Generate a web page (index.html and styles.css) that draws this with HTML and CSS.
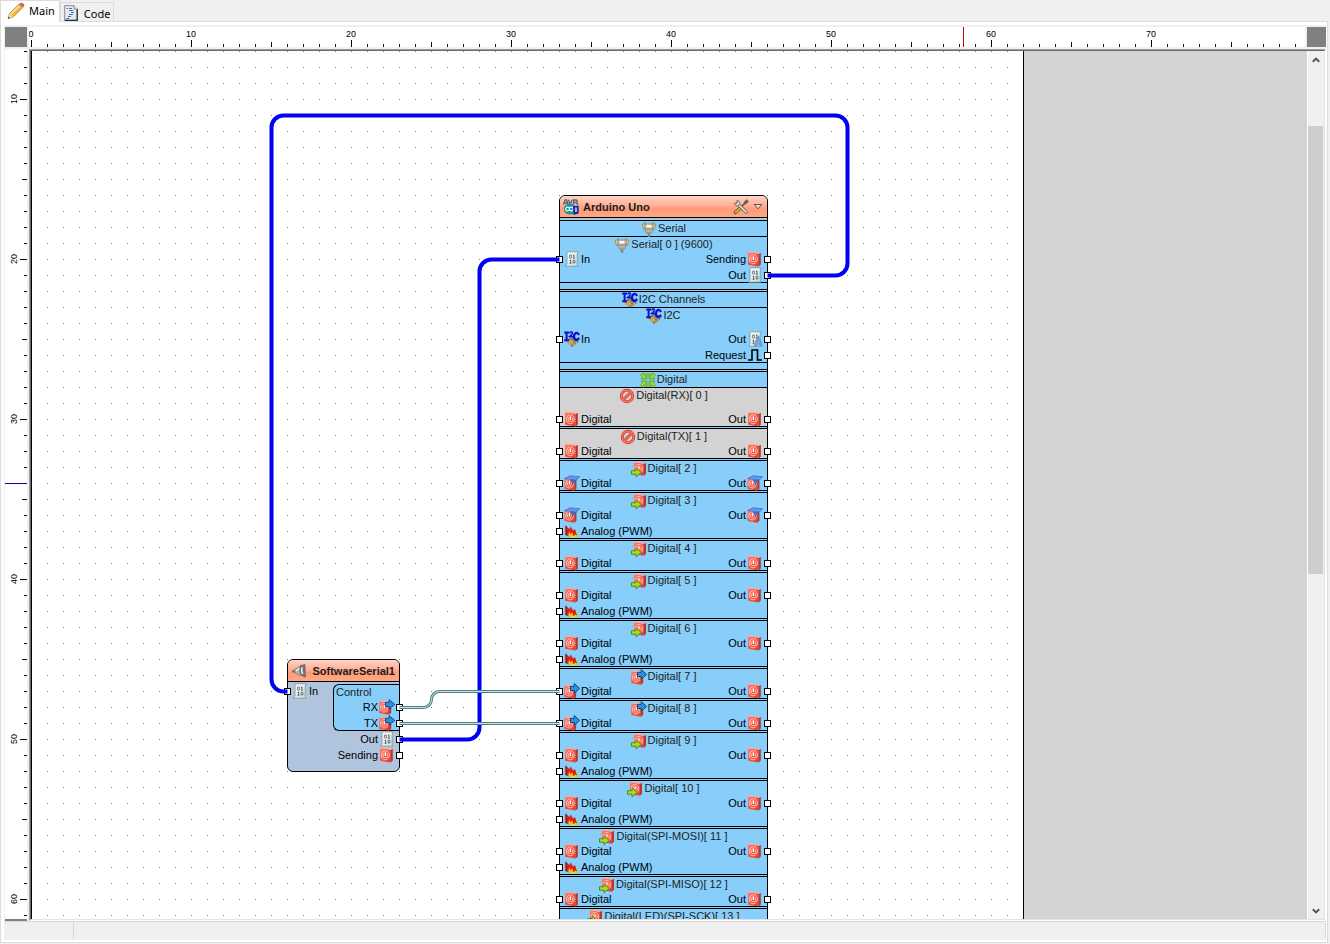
FILE: index.html
```html
<!DOCTYPE html>
<html lang="en">
<head>
    <meta charset="UTF-8">
    <meta name="viewport" content="width=device-width, initial-scale=1.0">
    <title>Arduino Uno</title>
    <link rel="stylesheet" href="styles.css">
</head>
<body>
    <svg class="defs" width="0" height="0" aria-hidden="true">
        <defs>
            <linearGradient id="red" x1="0" y1="0" x2="1" y2="1">
                <stop offset="0" stop-color="#ff8a78"/>
                <stop offset=".5" stop-color="#f4503c"/>
                <stop offset="1" stop-color="#e83a26"/>
            </linearGradient>
            <linearGradient id="paper" x1="0" y1="0" x2="1" y2="1">
                <stop offset="0" stop-color="#fff"/>
                <stop offset="1" stop-color="#c4dcdc"/>
            </linearGradient>
        </defs>
        <symbol id="i-power" viewBox="0 0 16 16">
            <path d="M1 1.2 11.6 2.8V15.6L1 13.8Z" fill="url(#red)"/>
            <path d="M11.6 2.8 13.8 1.8V13.6L11.6 15.6Z" fill="#b83428"/>
            <path d="M1 1.2 3.4.4 13.8 1.8 11.6 2.8Z" fill="#ffb0a0"/>
            <ellipse cx="6.4" cy="8.3" rx="3.9" ry="4.5" fill="none" stroke="#ffc4ba" stroke-width="1"/>
            <path d="M5 6.2Q3.9 7.2 4.2 8.9 4.8 10.8 6.4 10.9 8.3 10.8 8.7 9 8.8 7.2 7.9 6.4" fill="none" stroke="#fff" stroke-width=".7"/>
            <path d="M6.4 5.2V9" stroke="#fff" stroke-width="1.3"/>
        </symbol>
        <symbol id="i-power-in" viewBox="0 0 16 16">
            <use href="#i-power" x="2" y="0" width="15" height="15"/>
            <path d="M.5 9.7H5V7L10.2 11.4 5 15.8V13.2H.5Z" fill="#a4dc28" stroke="#4d7f10" stroke-width=".9"/>
        </symbol>
        <symbol id="i-power-out" viewBox="0 0 16 16">
            <use href="#i-power" x="-1" y="1" width="15.5" height="15"/>
            <path d="M6.5 3.3H10.2V.6L15.7 5.4 10.2 10.2V7.5H6.5Z" fill="#2f8fe0" stroke="#0c3c78" stroke-width=".9"/>
        </symbol>
        <symbol id="i-filter" viewBox="0 0 16 16">
            <use href="#i-power" x="-1" y="1" width="16" height="15"/>
            <path d="M.8 3.6 6 .8 15.8 1.8 12 5.2Z" fill="#5b9af0" stroke="#2d5db8" stroke-width=".6"/>
            <path d="M6 4.4 12 5.2 9.5 8 8.4 11 7.6 7.6Z" fill="#3a6cd0"/>
        </symbol>
        <symbol id="i-binary" viewBox="0 0 16 16">
            <path d="M3 .8H14.4L13.2 3V13L14 15.2H1.2L3 13Z" fill="url(#paper)" stroke="#7d9494" stroke-width=".8"/>
            <g fill="none" stroke="#444" stroke-width=".8">
                <ellipse cx="6.5" cy="5.5" rx="1.1" ry="1.6"/>
                <path d="M9 4.4 10 3.9V7M8.9 7.2H11"/>
                <ellipse cx="10" cy="10.6" rx="1.1" ry="1.6"/>
                <path d="M5.6 9.5 6.6 9V12M5.5 12.3H7.6"/>
            </g>
        </symbol>
        <symbol id="i-data" viewBox="0 0 16 16">
            <use href="#i-binary"/>
            <path d="M7 15 11.6 5 15.5 15H12.8L12 12.4 9.6 15Z" fill="#7aa8dc" stroke="#4a78b4" stroke-width=".5"/>
        </symbol>
        <symbol id="i-serial" viewBox="0 0 16 16">
            <path d="M1.2 3H14.8L13.6 8H2.4Z" fill="#d9d5c8" stroke="#85806e" stroke-width=".8"/>
            <path d="M3.6 8H12.4L10.6 12H5.4Z" fill="#b4b4ac" stroke="#77776e" stroke-width=".6"/>
            <path d="M8 12V15.8" stroke="#8a8a80" stroke-width="2.6"/>
            <path d="M4 .8V9M12 .8V9" stroke="#a89458" stroke-width="1.4"/>
            <path d="M6 5H10" stroke="#fff" stroke-width="2"/>
        </symbol>
        <symbol id="i-i2c" viewBox="0 0 16 16">
            <path d="M2.6 10 8 6 14.5 10.5 8 15.6Z" fill="#85858c" stroke="#44464e" stroke-width=".6"/>
            <path d="M2.8 10.5 7.5 8.5 9.4 12 6.5 15Z" fill="#d9a53c"/>
            <path d="M10 12.5V15M12.4 11V13.6" stroke="#e9b53c" stroke-width="1.1"/>
            <path d="M.2 1.6H5M2.6 1.6V9M.2 9.2H5" stroke="#1010c4" stroke-width="2" fill="none"/>
            <path d="M5.4 2.2Q7.8-.4 8.4 2 8.4 3.4 5.6 5.6H9.2" stroke="#1010c4" stroke-width="1.5" fill="none"/>
            <path d="M15 4Q14 1.4 11.8 2 9.8 3.2 10 5.8 10.4 9 12.8 8.8L15.3 7.2" stroke="#1010c4" stroke-width="2.3" fill="none"/>
        </symbol>
        <symbol id="i-pulse" viewBox="0 0 16 16">
            <path d="M1 13H5V3H10.5V13H15" fill="none" stroke="#000" stroke-width="1.6"/>
        </symbol>
        <symbol id="i-digital" viewBox="0 0 16 16">
            <g fill="#84cc1c" stroke="#5c9c18" stroke-width=".6">
                <path d="M.5 3.2 3.2.5 5 2.6 7 1V7H1L2.6 5Z"/>
                <path d="M15.5 3.2 12.8.5 11 2.6 9 1V7H15L13.4 5Z"/>
                <path d="M.5 12.8 3.2 15.5 5 13.4 7 15V9H1L2.6 11Z"/>
                <path d="M15.5 12.8 12.8 15.5 11 13.4 9 15V9H15L13.4 11Z"/>
            </g>
            <path d="M2 3 5 6M14 3 11 6M2 13 5 10M14 13 11 10" stroke="#d4f08c" stroke-width=".8"/>
        </symbol>
        <symbol id="i-locked" viewBox="0 0 16 16">
            <circle cx="8" cy="8" r="5.8" fill="none" stroke="#c83020" stroke-width="2.8"/>
            <path d="M4.2 11.8 11.8 4.2" stroke="#c83020" stroke-width="2.8"/>
            <circle cx="8" cy="8" r="5.8" fill="none" stroke="#f8735e" stroke-width="1.6"/>
            <path d="M4.2 11.8 11.8 4.2" stroke="#f8735e" stroke-width="1.6"/>
        </symbol>
        <symbol id="i-pwm" viewBox="0 0 16 16">
            <path d="M3 12.5 12.5 8 13.5 15 6 14Z" fill="#f0d428"/>
            <path d="M1.5 12V2.5L5.5 6 6.6 3.6 9.2 7.4 11 6 13.2 12.8 11 11.4 9.5 13.2 7.5 11 5 13.4Z" fill="#d42418"/>
            <path d="M4.2 12.5 5 8.5 6.8 11 8 9.3 9.6 12.4 7.5 11.6 5.5 14Z" fill="#f6b428"/>
            <path d="M1.5 12V2.5L2.6 3.4V12.6Z" fill="#8c1410"/>
        </symbol>
        <symbol id="i-avr" viewBox="0 0 16 16">
            <path d="M.5 5.5 2.2.8H3.6L5 5.5M1.6 4H4.2M5.4.8 7.2 5.2 9.2.8M10.6 5.5V1H13.4Q15.4 2.2 13.2 3.4H11M13 3.4 15 5.5" fill="none" stroke="#50646c" stroke-width="1.3"/>
            <ellipse cx="7" cy="10" rx="6.2" ry="5.6" fill="#1a97a4"/>
            <path d="M2.6 10A1.9 1.9 0 1 1 6.4 10 1.9 1.9 0 1 0 10.2 10 1.9 1.9 0 1 0 6.4 10 1.9 1.9 0 1 1 2.6 10" fill="none" stroke="#fff" stroke-width="1.1"/>
            <path d="M10 7.2 15.6 6.4V14.6L10.5 16Z" fill="#1028b0"/>
            <path d="M13 8.6V13" stroke="#fff" stroke-width="1.3"/>
        </symbol>
        <symbol id="i-tools" viewBox="0 0 16 16">
            <path d="M2.4 13.6 7.4 9" stroke="#6b5a28" stroke-width="3.4" stroke-linecap="round"/>
            <path d="M2.6 13.4 7 9.4" stroke="#f0b428" stroke-width="1.8" stroke-linecap="round"/>
            <path d="M7 9.2 12.4 3.6" stroke="#5f5f58" stroke-width="1.8"/>
            <path d="M11.6 4.4 14.8 1.4" stroke="#5f5f58" stroke-width="3"/>
            <path d="M4 4.3 13.2 13.2" stroke="#5f5f58" stroke-width="3.2" stroke-linecap="round"/>
            <path d="M4 4.3 13.2 13.2" stroke="#dcdcd2" stroke-width="1.7" stroke-linecap="round"/>
            <path d="M4 1.3A2.8 2.8 0 1 1 1.2 4.2L3.4 4.6 4.4 3.4Z" fill="#dcdcd2" stroke="#66665e" stroke-width=".8"/>
        </symbol>
        <symbol id="i-expand" viewBox="0 0 10 8">
            <path d="M1.2 1.5H8.8L5 5.8Z" fill="#ffd8ca" stroke="#555" stroke-width="1"/>
        </symbol>
        <symbol id="i-plug" viewBox="0 0 16 16">
            <path d="M1 8.4H5" stroke="#77706c" stroke-width="2.2"/>
            <path d="M3 6.5 9.5 3V12.5L5 11Z" fill="#b4aca8" stroke="#77706c" stroke-width=".6"/>
            <path d="M5 8 9 5.4" stroke="#eee" stroke-width="1.4"/>
            <path d="M9.5 2.5 14 1.6 14.4 14 10.5 12.5Q7.6 8 9.5 2.5Z" fill="#77777a" stroke="#555" stroke-width=".6"/>
            <path d="M11 4.5Q10 8 11.6 11" stroke="#eee" stroke-width="1.6" fill="none"/>
        </symbol>
        <symbol id="i-pencil" viewBox="0 0 18 18">
            <path d="M1 16.5 2.5 11.6 12.5 1.8 16 5.3 6 15Z" fill="#f5b73a" stroke="#a8702a" stroke-width=".8"/>
            <path d="M3.8 12.3 12.6 3.6" stroke="#ffe49a" stroke-width="1.5"/>
            <path d="M12 2.4 14 .8Q17.4 1 17.2 4L15.6 5.8Z" fill="#e06038"/>
            <path d="M11.2 3.1 12.2 2.1 15.8 5.7 14.8 6.7Z" fill="#a8b4c0"/>
            <path d="M1 16.5 2.5 11.6 6 15Z" fill="#f6dcb0"/>
            <path d="M1 16.7 1.7 14.6 3.1 16Z" fill="#333"/>
        </symbol>
        <symbol id="i-code" viewBox="0 0 14 16">
            <path d="M.7.7H10L13.3 4V15.3H.7Z" fill="#e8eaec" stroke="#888" stroke-width="1"/>
            <path d="M13.2 4V15.3H.7" fill="none" stroke="#333" stroke-width="1.3"/>
            <path d="M10 .7V4H13.3" fill="#fff" stroke="#777" stroke-width=".9"/>
            <path d="M2.5 3.5H4M5 3.5H8M5 5.5H9M7 7.5H10M5 9.5H9M4 11.5H7M2.5 13.5H5" stroke="#2b78d4" stroke-width="1.1"/>
        </symbol>
    </svg>

    <div class="tabs" role="tablist">
        <button class="tab active" role="tab"><svg class="tab-icon"><use href="#i-pencil"/></svg>Main</button>
        <button class="tab" role="tab"><svg class="tab-icon small"><use href="#i-code"/></svg>Code</button>
    </div>

    <main class="panel">
        <div class="workspace">
            <div class="corner"></div>
            <div class="ruler ruler-x">
                <span>0</span><span>10</span><span>20</span><span>30</span><span>40</span><span>50</span><span>60</span><span>70</span>
                <i class="cursor-x"></i>
            </div>
            <div class="corner"></div>
            <div class="ruler ruler-y">
                <span>10</span><span>20</span><span>30</span><span>40</span><span>50</span><span>60</span>
                <i class="cursor-y"></i>
            </div>

            <div class="frame">
                <div class="frame-inner">
                    <div class="viewport">
                        <div class="sheet"></div>

                        <section class="node arduino">
                            <header class="node-head">
                                <svg class="icon"><use href="#i-avr"/></svg>
                                <h2>Arduino Uno</h2>
                                <button class="tool" aria-label="Settings"><svg class="icon"><use href="#i-tools"/></svg></button>
                                <button class="tool" aria-label="Expand"><svg class="icon-small"><use href="#i-expand"/></svg></button>
                            </header>

                            <div class="group">
                                <h3 class="title"><svg class="icon"><use href="#i-serial"/></svg>Serial</h3>
                                <div class="channel">
                                    <h4 class="title"><svg class="icon"><use href="#i-serial"/></svg>Serial[ 0 ] (9600)</h4>
                                    <div class="pins">
                                        <div class="pin in"><i class="port"></i><svg class="icon"><use href="#i-binary"/></svg>In</div>
                                        <div class="pin out">Sending<svg class="icon"><use href="#i-power"/></svg><i class="port"></i></div>
                                    </div>
                                    <div class="pins">
                                        <div class="pin out">Out<svg class="icon"><use href="#i-binary"/></svg><i class="port"></i></div>
                                    </div>
                                </div>
                            </div>

                            <div class="group">
                                <h3 class="title"><svg class="icon"><use href="#i-i2c"/></svg>I2C Channels</h3>
                                <div class="channel tall">
                                    <h4 class="title"><svg class="icon"><use href="#i-i2c"/></svg>I2C</h4>
                                    <div class="pins">
                                        <div class="pin in"><i class="port"></i><svg class="icon"><use href="#i-i2c"/></svg>In</div>
                                        <div class="pin out">Out<svg class="icon"><use href="#i-data"/></svg><i class="port"></i></div>
                                    </div>
                                    <div class="pins">
                                        <div class="pin out">Request<svg class="icon"><use href="#i-pulse"/></svg><i class="port"></i></div>
                                    </div>
                                </div>
                            </div>

                            <div class="group">
                                <h3 class="title"><svg class="icon"><use href="#i-digital"/></svg>Digital</h3>
                                <div class="channel tall disabled">
                                    <h4 class="title"><svg class="icon"><use href="#i-locked"/></svg>Digital(RX)[ 0 ]</h4>
                                    <div class="pins">
                                        <div class="pin in"><i class="port"></i><svg class="icon"><use href="#i-power"/></svg>Digital</div>
                                        <div class="pin out">Out<svg class="icon"><use href="#i-power"/></svg><i class="port"></i></div>
                                    </div>
                                </div>
                                <div class="channel disabled">
                                    <h4 class="title"><svg class="icon"><use href="#i-locked"/></svg>Digital(TX)[ 1 ]</h4>
                                    <div class="pins">
                                        <div class="pin in"><i class="port"></i><svg class="icon"><use href="#i-power"/></svg>Digital</div>
                                        <div class="pin out">Out<svg class="icon"><use href="#i-power"/></svg><i class="port"></i></div>
                                    </div>
                                </div>
                                <div class="channel">
                                    <h4 class="title"><svg class="icon"><use href="#i-power-in"/></svg>Digital[ 2 ]</h4>
                                    <div class="pins">
                                        <div class="pin in"><i class="port"></i><svg class="icon"><use href="#i-filter"/></svg>Digital</div>
                                        <div class="pin out">Out<svg class="icon"><use href="#i-filter"/></svg><i class="port"></i></div>
                                    </div>
                                </div>
                                <div class="channel">
                                    <h4 class="title"><svg class="icon"><use href="#i-power-in"/></svg>Digital[ 3 ]</h4>
                                    <div class="pins">
                                        <div class="pin in"><i class="port"></i><svg class="icon"><use href="#i-filter"/></svg>Digital</div>
                                        <div class="pin out">Out<svg class="icon"><use href="#i-filter"/></svg><i class="port"></i></div>
                                    </div>
                                    <div class="pins">
                                        <div class="pin in"><i class="port"></i><svg class="icon"><use href="#i-pwm"/></svg>Analog (PWM)</div>
                                    </div>
                                </div>
                                <div class="channel">
                                    <h4 class="title"><svg class="icon"><use href="#i-power-in"/></svg>Digital[ 4 ]</h4>
                                    <div class="pins">
                                        <div class="pin in"><i class="port"></i><svg class="icon"><use href="#i-power"/></svg>Digital</div>
                                        <div class="pin out">Out<svg class="icon"><use href="#i-power"/></svg><i class="port"></i></div>
                                    </div>
                                </div>
                                <div class="channel">
                                    <h4 class="title"><svg class="icon"><use href="#i-power-in"/></svg>Digital[ 5 ]</h4>
                                    <div class="pins">
                                        <div class="pin in"><i class="port"></i><svg class="icon"><use href="#i-power"/></svg>Digital</div>
                                        <div class="pin out">Out<svg class="icon"><use href="#i-power"/></svg><i class="port"></i></div>
                                    </div>
                                    <div class="pins">
                                        <div class="pin in"><i class="port"></i><svg class="icon"><use href="#i-pwm"/></svg>Analog (PWM)</div>
                                    </div>
                                </div>
                                <div class="channel">
                                    <h4 class="title"><svg class="icon"><use href="#i-power-in"/></svg>Digital[ 6 ]</h4>
                                    <div class="pins">
                                        <div class="pin in"><i class="port"></i><svg class="icon"><use href="#i-power"/></svg>Digital</div>
                                        <div class="pin out">Out<svg class="icon"><use href="#i-power"/></svg><i class="port"></i></div>
                                    </div>
                                    <div class="pins">
                                        <div class="pin in"><i class="port"></i><svg class="icon"><use href="#i-pwm"/></svg>Analog (PWM)</div>
                                    </div>
                                </div>
                                <div class="channel">
                                    <h4 class="title"><svg class="icon"><use href="#i-power-out"/></svg>Digital[ 7 ]</h4>
                                    <div class="pins">
                                        <div class="pin in"><i class="port"></i><svg class="icon"><use href="#i-power-out"/></svg>Digital</div>
                                        <div class="pin out">Out<svg class="icon"><use href="#i-power"/></svg><i class="port"></i></div>
                                    </div>
                                </div>
                                <div class="channel">
                                    <h4 class="title"><svg class="icon"><use href="#i-power-out"/></svg>Digital[ 8 ]</h4>
                                    <div class="pins">
                                        <div class="pin in"><i class="port"></i><svg class="icon"><use href="#i-power-out"/></svg>Digital</div>
                                        <div class="pin out">Out<svg class="icon"><use href="#i-power"/></svg><i class="port"></i></div>
                                    </div>
                                </div>
                                <div class="channel">
                                    <h4 class="title"><svg class="icon"><use href="#i-power-in"/></svg>Digital[ 9 ]</h4>
                                    <div class="pins">
                                        <div class="pin in"><i class="port"></i><svg class="icon"><use href="#i-power"/></svg>Digital</div>
                                        <div class="pin out">Out<svg class="icon"><use href="#i-power"/></svg><i class="port"></i></div>
                                    </div>
                                    <div class="pins">
                                        <div class="pin in"><i class="port"></i><svg class="icon"><use href="#i-pwm"/></svg>Analog (PWM)</div>
                                    </div>
                                </div>
                                <div class="channel">
                                    <h4 class="title"><svg class="icon"><use href="#i-power-in"/></svg>Digital[ 10 ]</h4>
                                    <div class="pins">
                                        <div class="pin in"><i class="port"></i><svg class="icon"><use href="#i-power"/></svg>Digital</div>
                                        <div class="pin out">Out<svg class="icon"><use href="#i-power"/></svg><i class="port"></i></div>
                                    </div>
                                    <div class="pins">
                                        <div class="pin in"><i class="port"></i><svg class="icon"><use href="#i-pwm"/></svg>Analog (PWM)</div>
                                    </div>
                                </div>
                                <div class="channel">
                                    <h4 class="title"><svg class="icon"><use href="#i-power-in"/></svg>Digital(SPI-MOSI)[ 11 ]</h4>
                                    <div class="pins">
                                        <div class="pin in"><i class="port"></i><svg class="icon"><use href="#i-power"/></svg>Digital</div>
                                        <div class="pin out">Out<svg class="icon"><use href="#i-power"/></svg><i class="port"></i></div>
                                    </div>
                                    <div class="pins">
                                        <div class="pin in"><i class="port"></i><svg class="icon"><use href="#i-pwm"/></svg>Analog (PWM)</div>
                                    </div>
                                </div>
                                <div class="channel">
                                    <h4 class="title"><svg class="icon"><use href="#i-power-in"/></svg>Digital(SPI-MISO)[ 12 ]</h4>
                                    <div class="pins">
                                        <div class="pin in"><i class="port"></i><svg class="icon"><use href="#i-power"/></svg>Digital</div>
                                        <div class="pin out">Out<svg class="icon"><use href="#i-power"/></svg><i class="port"></i></div>
                                    </div>
                                </div>
                                <div class="channel">
                                    <h4 class="title"><svg class="icon"><use href="#i-power-in"/></svg>Digital(LED)(SPI-SCK)[ 13 ]</h4>
                                </div>
                            </div>
                        </section>

                        <section class="node software-serial">
                            <header class="node-head">
                                <svg class="icon"><use href="#i-plug"/></svg>
                                <h2>SoftwareSerial1</h2>
                            </header>
                            <div class="node-body">
                                <div class="inputs">
                                    <div class="pin in"><i class="port"></i><svg class="icon"><use href="#i-binary"/></svg>In</div>
                                </div>
                                <div class="outputs">
                                    <div class="control">
                                        <h4 class="title">Control</h4>
                                        <div class="pins">
                                            <div class="pin out">RX<svg class="icon"><use href="#i-power-out"/></svg><i class="port"></i></div>
                                        </div>
                                        <div class="pins">
                                            <div class="pin out">TX<svg class="icon"><use href="#i-power-out"/></svg><i class="port"></i></div>
                                        </div>
                                    </div>
                                    <div class="pin out">Out<svg class="icon"><use href="#i-binary"/></svg><i class="port"></i></div>
                                    <div class="pin out">Sending<svg class="icon"><use href="#i-power"/></svg><i class="port"></i></div>
                                </div>
                            </div>
                        </section>

                        <svg class="wires" aria-hidden="true">
                            <g class="wire-data">
                                <path d="M256.5 640.5H252.5A12 12 0 0 1 240.5 628.5V76.5A12 12 0 0 1 252.5 64.5H804.5A12 12 0 0 1 816.5 76.5V212.5A12 12 0 0 1 804.5 224.5H736.5"/>
                                <path d="M368.5 688.5H436.5A12 12 0 0 0 448.5 676.5V220.5A12 12 0 0 1 460.5 208.5H528.5"/>
                            </g>
                            <g class="wire-digital">
                                <path d="M368.5 656.5H392.5A8 8 0 0 0 400.5 648.5A8 8 0 0 1 408.5 640.5H528.5M368.5 672.5H528.5"/>
                            </g>
                            <g class="wire-digital core">
                                <path d="M368.5 656.5H392.5A8 8 0 0 0 400.5 648.5A8 8 0 0 1 408.5 640.5H528.5M368.5 672.5H528.5"/>
                            </g>
                        </svg>
                    </div>

                    <div class="scrollbar">
                        <button class="scroll-button" aria-label="Scroll up"><svg width="8" height="6"><path d="M.8 4.8 4 1.6 7.2 4.8"/></svg></button>
                        <div class="track"><div class="thumb"></div></div>
                        <button class="scroll-button" aria-label="Scroll down"><svg width="8" height="6"><path d="M.8 1.2 4 4.4 7.2 1.2"/></svg></button>
                    </div>
                </div>
            </div>
        </div>

        <footer class="status">
            <div class="status-cell"></div>
            <div class="status-cell wide"></div>
        </footer>
    </main>
</body>
</html>
```

FILE: styles.css
```css
* {
    box-sizing: border-box;
}
body {
    display: flex;
    flex-direction: column;
    height: 100vh;
    margin: 0;
    padding: 0 2px 1px 0;
    overflow: hidden;
    background-color: #f0f0f0;
    color: #000;
    font-family: "Liberation Sans", Arial, sans-serif;
    font-size: 11px;
}
h2, h3, h4 {
    margin: 0;
    font-size: 11px;
    font-weight: normal;
}
button {
    padding: 0;
    border: none;
    background: none;
    font: inherit;
    color: inherit;
}
.defs {
    position: absolute;
}

/* tabs */
.tabs {
    display: flex;
    align-items: flex-end;
    height: 21px;
    border-left: 1px solid #dcdcdc;
}
.tab {
    display: flex;
    align-items: center;
    gap: 6px;
    height: 19px;
    padding: 2px 3px 0;
    border: 1px solid #dcdcdc;
    border-bottom: none;
    font-family: "Noto Sans", Tahoma, sans-serif;
}
.tab.active {
    z-index: 1;
    gap: 4px;
    height: 22px;
    margin-bottom: -1px;
    padding: 0 4px 2px 6px;
    border-left: none;
    background-color: #fff;
}
.tab-icon {
    width: 18px;
    height: 18px;
}
.tab-icon.small {
    width: 14px;
    height: 16px;
}

/* panel and rulers */
.panel {
    display: flex;
    flex: 1;
    flex-direction: column;
    min-height: 0;
    padding: 3px 1px 2px 3px;
    border: 1px solid #dcdcdc;
    background-color: #fff;
}
.workspace {
    display: grid;
    flex: 1;
    grid-template-columns: 22px 1fr 19px;
    grid-template-rows: 20px 1fr;
    gap: 2px;
    min-height: 0;
    padding: 2px 0 0 1px;
    background-color: #f0f0f0;
}
.corner {
    background-color: #808080;
}
.ruler {
    position: relative;
    display: flex;
    min-width: 0;
    min-height: 0;
    overflow: hidden;
    background-color: #fff;
    font-size: 9px;
    line-height: 12px;
}
.ruler span {
    flex: 0 0 160px;
    text-align: center;
}
.ruler-x {
    padding-top: 1px;
    background-image:
        linear-gradient(90deg, #000 1px, transparent 1px),
        linear-gradient(90deg, #000 1px, transparent 1px),
        linear-gradient(90deg, #000 1px, transparent 1px);
    background-size: 16px 3px, 80px 5px, 160px 7px;
    background-position: 2px 100%;
    background-repeat: repeat-x;
}
.ruler-x span:first-child {
    margin-left: -78px;
}
.ruler-y {
    flex-direction: column;
    border-bottom: 2px solid #808080;
    background-image:
        linear-gradient(#000 1px, transparent 1px),
        linear-gradient(#000 1px, transparent 1px),
        linear-gradient(#000 1px, transparent 1px);
    background-size: 3px 16px, 5px 80px, 7px 160px;
    background-position: 100% 2px, 100% 50px, 100% 50px;
    background-repeat: repeat-y;
}
.ruler-y span {
    width: 12px;
    margin-left: 3px;
    writing-mode: vertical-rl;
    transform: rotate(180deg);
}
.ruler-y span:first-child {
    margin-top: -30px;
}
.cursor-x {
    position: absolute;
    top: 0;
    bottom: 0;
    left: 934px;
    width: 1px;
    background-color: #d00000;
}
.cursor-y {
    position: absolute;
    top: 434px;
    right: 0;
    left: 0;
    height: 1px;
    background-color: #0000c0;
}

/* drawing area */
.frame {
    display: flex;
    grid-column: 2 / 4;
    min-width: 0;
    min-height: 0;
    border: 1px solid;
    border-color: #a0a0a0 #fff #fff #a0a0a0;
}
.frame-inner {
    display: flex;
    flex: 1;
    min-width: 0;
    border: 1px solid;
    border-color: #696969 #e3e3e3 #e3e3e3 #696969;
}
.viewport {
    position: relative;
    flex: 1;
    min-width: 0;
    overflow: hidden;
    background-color: #d3d3d3;
}
.sheet {
    width: 993px;
    height: 100%;
    border: solid #000;
    border-width: 0 1px;
    background-color: #fff;
    background-image:
        linear-gradient(transparent 1px, #fff 1px),
        linear-gradient(90deg, #808080 1px, transparent 1px);
    background-size: 16px 16px;
    background-origin: border-box;
}
.wires {
    position: absolute;
    top: 0;
    left: 0;
    width: 100%;
    height: 100%;
    fill: none;
    pointer-events: none;
}
.wire-data {
    stroke: #0000f4;
    stroke-width: 4;
}
.wire-digital {
    stroke: #4f8080;
    stroke-width: 3;
}
.wire-digital.core {
    stroke: #c8e4e0;
    stroke-width: 1;
}

/* nodes */
.node {
    position: absolute;
    border: 1px solid #000;
    border-radius: 6px;
    background-color: #b0c4de;
}
.arduino {
    top: 144px;
    left: 528px;
    width: 209px;
}
.software-serial {
    top: 608px;
    left: 256px;
    width: 113px;
}
.node-head {
    display: flex;
    align-items: center;
    gap: 4px;
    height: 22px;
    padding: 0 4px 0 3px;
    border-bottom: 1px solid #000;
    border-radius: 5px 5px 0 0;
    background-image: linear-gradient(#ffd2c4, #ffb097 45%, #ff9c78 60%, #ffa884);
}
.node-head h2 {
    flex: 1;
    font-weight: bold;
    color: #1c1c1c;
    white-space: nowrap;
}
.software-serial h2 {
    text-align: right;
}
.tool {
    display: flex;
}
.icon {
    flex: none;
    width: 16px;
    height: 16px;
}
.icon-small {
    width: 10px;
    height: 8px;
}
.group {
    margin-bottom: 1px;
    padding-bottom: 6px;
    border: solid #000;
    border-width: 1px 0;
    background-color: #87cefa;
}
.node-head + .group {
    margin-top: 2px;
}
.title {
    display: flex;
    justify-content: center;
    align-items: center;
    gap: 1px;
    height: 14px;
    line-height: 14px;
    white-space: nowrap;
    color: #222;
}
.title .icon {
    margin-top: 2px;
}
.group > .title {
    padding-bottom: 1px;
    height: 15px;
}
.channel {
    border: solid #000;
    border-width: 1px 0;
}
.channel + .channel {
    margin-top: 1px;
}
.channel.disabled {
    background-color: #d3d3d3;
}
.channel.tall > .title {
    margin-bottom: 9px;
}
.pins {
    display: flex;
    height: 16px;
}
.pins:last-child {
    margin-bottom: -1px;
}
.pin {
    display: flex;
    align-items: center;
    gap: 1px;
    height: 16px;
    white-space: nowrap;
}
.pin.in {
    margin-left: -4px;
}
.pin.out {
    justify-content: flex-end;
    margin-right: -4px;
    margin-left: auto;
}
.port {
    width: 7px;
    height: 7px;
    border: 1px solid #000;
    background-color: #fff;
}
.node-body {
    display: grid;
    grid-template-columns: 45px 1fr;
    padding-bottom: 8px;
}
.inputs {
    padding-top: 1px;
}
.outputs {
    padding-top: 2px;
}
.control {
    border: solid #000;
    border-width: 1px 0 1px 1px;
    border-radius: 6px 0 0 6px;
    background-color: #87cefa;
}
.control .title {
    justify-content: flex-start;
    padding-left: 2px;
}

/* scrollbar */
.scrollbar {
    display: flex;
    flex: 0 0 17px;
    flex-direction: column;
    border-left: 1px solid #fff;
    background-color: #f0f0f0;
}
.scroll-button {
    display: flex;
    justify-content: center;
    align-items: center;
    height: 17px;
}
.scroll-button path {
    fill: none;
    stroke: #555;
    stroke-width: 2;
}
.track {
    flex: 1;
    padding-top: 58px;
}
.thumb {
    width: 15px;
    height: 58%;
    max-height: 448px;
    background-color: #cdcdcd;
}

/* status bar */
.status {
    display: flex;
    height: 19px;
    padding: 1px 0;
    border-top: 1px solid #d7d7d7;
    background-color: #f0f0f0;
}
.status-cell {
    width: 70px;
    border-right: 1px solid #d7d7d7;
}
.status-cell.wide {
    flex: 1;
}
```
